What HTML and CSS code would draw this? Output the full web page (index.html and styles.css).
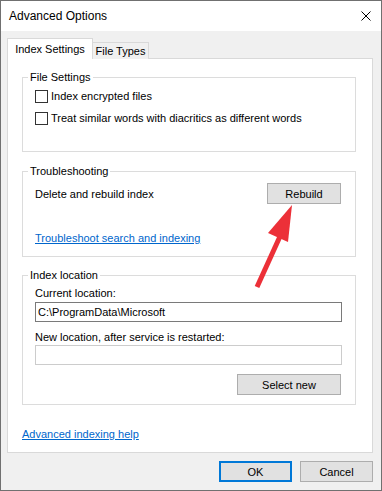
FILE: index.html
```html
<!DOCTYPE html>
<html lang="en">
<head>
    <meta charset="UTF-8">
    <title>Advanced Options</title>
    <link rel="stylesheet" href="styles.css">
</head>
<body>
    <div class="window">
        <div class="titlebar">
            <span class="title">Advanced Options</span>
            <svg class="close" width="10" height="10" viewBox="0 0 10 10">
                <path d="M0.5 0.5L9.5 9.5M9.5 0.5L0.5 9.5" stroke="#000" stroke-width="1"/>
            </svg>
        </div>

        <div class="body">
            <div class="tabs">
                <div class="tab active">Index Settings</div>
                <div class="tab">File Types</div>
            </div>

            <div class="panel">
                <fieldset class="group group-files">
                    <legend>File Settings</legend>
                    <label class="check"><span class="box"></span>Index encrypted files</label>
                    <label class="check second"><span class="box"></span>Treat similar words with diacritics as different words</label>
                </fieldset>

                <fieldset class="group group-trouble">
                    <legend>Troubleshooting</legend>
                    <div class="row">
                        <span>Delete and rebuild index</span>
                        <button class="btn">Rebuild</button>
                    </div>
                    <a class="link trouble-link" href="#">Troubleshoot search and indexing</a>
                </fieldset>

                <fieldset class="group group-location">
                    <legend>Index location</legend>
                    <div class="field-label">Current location:</div>
                    <div class="textbox">C:\ProgramData\Microsoft</div>
                    <div class="field-label second">New location, after service is restarted:</div>
                    <div class="textbox disabled"></div>
                    <div class="actions">
                        <button class="btn">Select new</button>
                    </div>
                </fieldset>

                <a class="link help-link" href="#">Advanced indexing help</a>
            </div>

            <div class="footer">
                <button class="btn default">OK</button>
                <button class="btn">Cancel</button>
            </div>
        </div>

        <!-- red annotation arrow -->
        <svg class="arrow" width="382" height="491" viewBox="0 0 382 491">
            <line x1="282" y1="232" x2="257" y2="287" stroke="#ec3038" stroke-width="5"/>
            <polygon points="292,205 288,242 268,233" fill="#ec3038"/>
        </svg>
    </div>
</body>
</html>
```

FILE: styles.css
```css
/* Base */
body {
    margin: 0;
    font-family: 'Liberation Sans', Arial, sans-serif;
    font-size: 11px;
    color: #000;
}

/* Window */
.window {
    position: relative;
    width: 382px;
    height: 491px;
    box-sizing: border-box;
    border: 1px solid #707070;
    background: #f0f0f0;
}

.titlebar {
    height: 30px;
    display: flex;
    align-items: center;
    justify-content: space-between;
    padding: 0 10px 0 8px;
    background: #fff;
}

.title {
    font-size: 12px;
}

.body {
    padding: 7px 8px 0 6px;
}

/* Tabs */
.tabs {
    display: flex;
    align-items: flex-end;
    height: 21px;
    position: relative;
    z-index: 1;
}

.tab {
    box-sizing: border-box;
    height: 17px;
    width: 56px;
    border: 1px solid #d9d9d9;
    border-bottom: none;
    border-left: none;
    background: #f0f0f0;
    text-align: center;
    line-height: 16px;
}

.tab.active {
    height: 21px;
    width: 86px;
    border-left: 1px solid #d9d9d9;
    background: #fff;
    line-height: 20px;
}

/* Panel */
.panel {
    box-sizing: border-box;
    height: 395px;
    margin-top: -1px;
    border: 1px solid #d9d9d9;
    background: #fff;
    padding-top: 10px;
    display: flex;
    flex-direction: column;
    align-items: flex-start;
}

/* Group boxes */
.group {
    box-sizing: border-box;
    width: 334px;
    margin: 0 0 0 14px;
    padding: 0 14px 0 12px;
    border: 1px solid #dcdcdc;
    min-width: 0;
}

.group legend {
    margin-left: -7px;
    padding: 0 2px;
    line-height: 16px;
}

.group-files {
    padding-top: 3px;
    padding-bottom: 25px;
}

.group-trouble {
    margin-top: 11px;
    padding-top: 4px;
    padding-bottom: 10px;
}

.group-location {
    margin-top: 10px;
    padding-top: 2px;
    padding-bottom: 9px;
}

.check {
    display: flex;
    align-items: center;
    line-height: 16px;
}

.check.second {
    margin-top: 6px;
}

.box {
    width: 11px;
    height: 11px;
    border: 1px solid #333;
    margin-right: 3px;
    background: #fff;
}

.row {
    display: flex;
    align-items: center;
    justify-content: space-between;
    height: 21px;
}

.row .btn {
    width: 74px;
}

.link {
    color: #0066cc;
    text-decoration: underline;
    line-height: 16px;
}

.trouble-link {
    display: inline-block;
    margin-top: 26px;
}

.help-link {
    margin: 21px 0 0 14px;
}

.field-label {
    line-height: 16px;
}

.field-label.second {
    margin-top: 7px;
}

.textbox {
    box-sizing: border-box;
    height: 20px;
    width: 307px;
    margin-top: 1px;
    border: 1px solid #7a7a7a;
    padding-left: 2px;
    line-height: 18px;
    background: #fff;
}

.textbox.disabled {
    margin-top: 0;
    border-color: #cccccc;
}

.actions {
    display: flex;
    justify-content: flex-end;
    margin-top: 9px;
}

.actions .btn {
    width: 104px;
}

/* Buttons */
.btn {
    box-sizing: border-box;
    height: 21px;
    width: 73px;
    padding: 0;
    border: 1px solid #adadad;
    background: #e1e1e1;
    font-family: inherit;
    font-size: 11px;
    color: #000;
}

.btn.default {
    border: 2px solid #0078d7;
}

.footer {
    display: flex;
    justify-content: flex-end;
    gap: 8px;
    margin-top: 8px;
}

/* Annotation */
.arrow {
    position: absolute;
    top: -1px;
    left: -1px;
    pointer-events: none;
}
```
